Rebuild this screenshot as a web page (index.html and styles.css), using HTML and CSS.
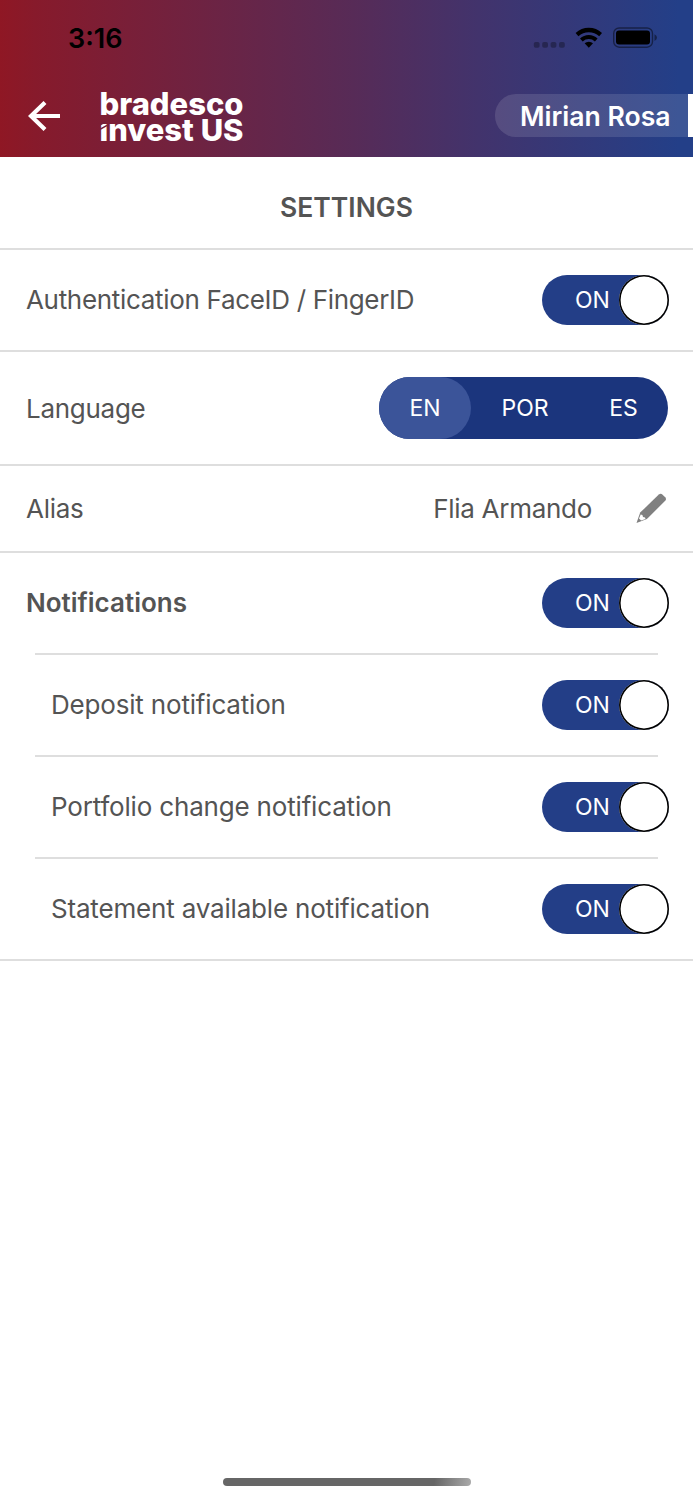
FILE: index.html
```
<!DOCTYPE html>
<html lang="en">
<head>
<meta charset="UTF-8">
<meta name="viewport" content="width=device-width, initial-scale=1.0">
<title>Settings</title>
<link rel="stylesheet" href="styles.css">
</head>
<body>

<div class="header">
  <div class="status">
    <span class="time">3:16</span>
    <svg class="status-icons" width="124" height="24" viewBox="0 0 124 24">
      <g fill="#000" fill-opacity="0.3">
        <rect x="0.8" y="16" width="5.8" height="5.8" rx="1.8"/>
        <rect x="9.2" y="16" width="5.8" height="5.8" rx="1.8"/>
        <rect x="17.6" y="16" width="5.8" height="5.8" rx="1.8"/>
        <rect x="26" y="16" width="5.8" height="5.8" rx="1.8"/>
      </g>
      <path d="M42.6 7 A19.5 19.5 0 0 1 69 7 L66.2 10.3 A15.4 15.4 0 0 0 45.4 10.3 Z"/>
      <path d="M47 12.4 A12.8 12.8 0 0 1 64.6 12.4 L61.9 15.4 A9 9 0 0 0 49.7 15.4 Z"/>
      <path d="M51.6 17.3 A6.4 6.4 0 0 1 60 17.3 L55.8 21.8 Z"/>
      <rect x="80.7" y="2" width="38.8" height="19.2" rx="5.5" fill="none" stroke="#000" stroke-opacity="0.45" stroke-width="1.4"/>
      <rect x="83" y="4.6" width="34" height="14" rx="3"/>
      <path d="M121.5 8.2 Q124 9.5 124 11.6 Q124 13.8 121.5 15 Z" fill-opacity="0.45"/>
    </svg>
  </div>
  <div class="bar">
    <svg class="back" width="32" height="30" viewBox="0 0 32 30">
      <path d="M17 1.5 L3 15 L17 28.5 M2.5 15 H32" fill="none" stroke="#fff" stroke-width="4.2"/>
    </svg>
    <svg class="logo" width="150" height="64" viewBox="0 -4 150 64">
      <text class="logo-top" x="-0.5" y="27" textLength="144" lengthAdjust="spacingAndGlyphs">bradesco</text>
      <text x="-0.5" y="52.5" textLength="144" lengthAdjust="spacingAndGlyphs">ınvest US</text>
      <path class="cut" d="M0 41.4 L7 37.4 M-0.5 37 L5.5 33.8"/>
    </svg>
    <div class="user">Mirian Rosa</div>
  </div>
</div>

<div class="title">SETTINGS</div>

<div class="row">
  <span class="label auth">Authentication FaceID / FingerID</span>
  <div class="toggle">ON<span class="knob"></span></div>
</div>

<div class="row row-language">
  <span class="label">Language</span>
  <div class="langs">
    <span class="lang active">EN</span>
    <span class="lang">POR</span>
    <span class="lang">ES</span>
  </div>
</div>

<div class="row row-alias">
  <span class="label">Alias</span>
  <div class="alias">
    <span class="label">Flia Armando</span>
    <svg width="31" height="31" viewBox="0 0 31 31">
      <path d="M22.8 1.6 Q24.7 0 26.6 1.7 L29.2 4.2 Q30.8 6 29.2 7.8 L10.9 26 L0.5 30 L4.2 19.6 Z" fill="#808080"/>
      <path d="M4.7 21.5 L6.4 22 L7 24 L9 24.5 L9.5 26 L5.2 27.6 L3 25.6 Z" fill="#fff"/>
    </svg>
  </div>
</div>

<div class="row row-head">
  <span class="label bold">Notifications</span>
  <div class="toggle">ON<span class="knob"></span></div>
</div>

<div class="group">
  <div class="row row-sub">
    <span class="label">Deposit notification</span>
    <div class="toggle">ON<span class="knob"></span></div>
  </div>
  <div class="row row-sub">
    <span class="label">Portfolio change notification</span>
    <div class="toggle">ON<span class="knob"></span></div>
  </div>
  <div class="row row-sub">
    <span class="label">Statement available notification</span>
    <div class="toggle">ON<span class="knob"></span></div>
  </div>
</div>

<div class="home"></div>

</body>
</html>
```

FILE: styles.css
```
* {
  box-sizing: border-box;
}

body {
  margin: 0;
  height: 1500px;
  display: flex;
  flex-direction: column;
  font-family: Inter, "Liberation Sans", sans-serif;
  font-size: 26px;
  color: #545454;
  background-color: #fff;
  overflow: hidden;
}

.header {
  height: 157px;
  color: white;
  background: linear-gradient(90deg, #8f1724 0%, #871a2b 5%, #572b57 51%, #42336c 69%, #233f88 98%);
}

.status {
  height: 74px;
  padding: 26px 36px 0 68px;
  display: flex;
  justify-content: space-between;
}

.time {
  color: #000;
  font-size: 27px;
  font-weight: 600;
  line-height: 25px;
}

.bar {
  height: 83px;
  padding-left: 28px;
  display: flex;
  align-items: center;
}

.logo {
  margin-left: 40px;
}

.logo text {
  font-family: Inter, sans-serif;
  font-size: 30px;
  font-weight: 800;
  fill: #fff;
}

.logo .logo-top {
  font-size: 31px;
}

.cut {
  stroke: #731f3b;
  stroke-width: 1.6;
}

.user {
  width: 198px;
  height: 43px;
  margin-left: auto;
  padding-left: 25px;
  border-right: 5px solid #fff;
  border-radius: 21px 0 0 21px;
  background-color: rgba(255, 255, 255, 0.12);
  font-size: 26.6px;
  font-weight: 600;
  line-height: 44px;
  white-space: nowrap;
}

.title {
  height: 93px;
  padding-top: 8px;
  border-bottom: 2px solid #dedede;
  font-size: 26.5px;
  font-weight: 600;
  line-height: 85px;
  text-align: center;
}

.row {
  height: 102px;
  padding: 0 24px 0 26px;
  display: flex;
  justify-content: space-between;
  align-items: center;
  border-bottom: 2px solid #dedede;
}

.row-language {
  height: 114px;
  padding-right: 25px;
}

.row-alias {
  height: 87px;
  padding-right: 26px;
}

.row-head,
.row-sub {
  margin: 0 35px;
  padding: 0;
}

.row-head .label {
  margin-left: -9px;
}

.row-sub .label {
  margin-left: 16px;
}

.row-head .toggle,
.row-sub .toggle {
  margin-right: -11px;
}

.group {
  border-bottom: 2px solid #dedede;
}

.row-sub:last-child {
  height: 100px;
  border-bottom: none;
}

.label {
  padding-bottom: 2px;
  letter-spacing: -0.18px;
  white-space: nowrap;
}

.row-language .label,
.row-alias .label {
  padding-bottom: 0;
  letter-spacing: -0.28px;
}

.auth {
  letter-spacing: -0.32px;
}

.bold {
  font-weight: 600;
  letter-spacing: 0;
}

.toggle {
  width: 127px;
  height: 50px;
  padding-left: 33px;
  display: flex;
  justify-content: space-between;
  align-items: center;
  border-radius: 25px;
  background-color: #233e87;
  color: white;
  font-size: 23px;
}

/* the ring is an inset shadow so it keeps its fractional width */
.knob {
  width: 50px;
  height: 50px;
  border-radius: 50%;
  background-color: #fff;
  box-shadow: inset 0 0 0 1.6px #000;
}

.langs {
  width: 289px;
  height: 62px;
  display: flex;
  border-radius: 31px;
  background-color: #1b357d;
  color: white;
  font-size: 23px;
  line-height: 62px;
  text-align: center;
}

.lang {
  width: 92px;
}

.lang:nth-child(2) {
  width: 108px;
}

.lang:last-child {
  width: 89px;
}

.active {
  border-radius: 31px;
  background-color: #3b5499;
}

.alias {
  display: flex;
  align-items: center;
  gap: 44px;
}

.home {
  width: 248px;
  height: 8px;
  margin: auto auto 14px;
  border-radius: 4px;
  background: linear-gradient(100deg, #666 85%, #aaa 100%);
}
```
